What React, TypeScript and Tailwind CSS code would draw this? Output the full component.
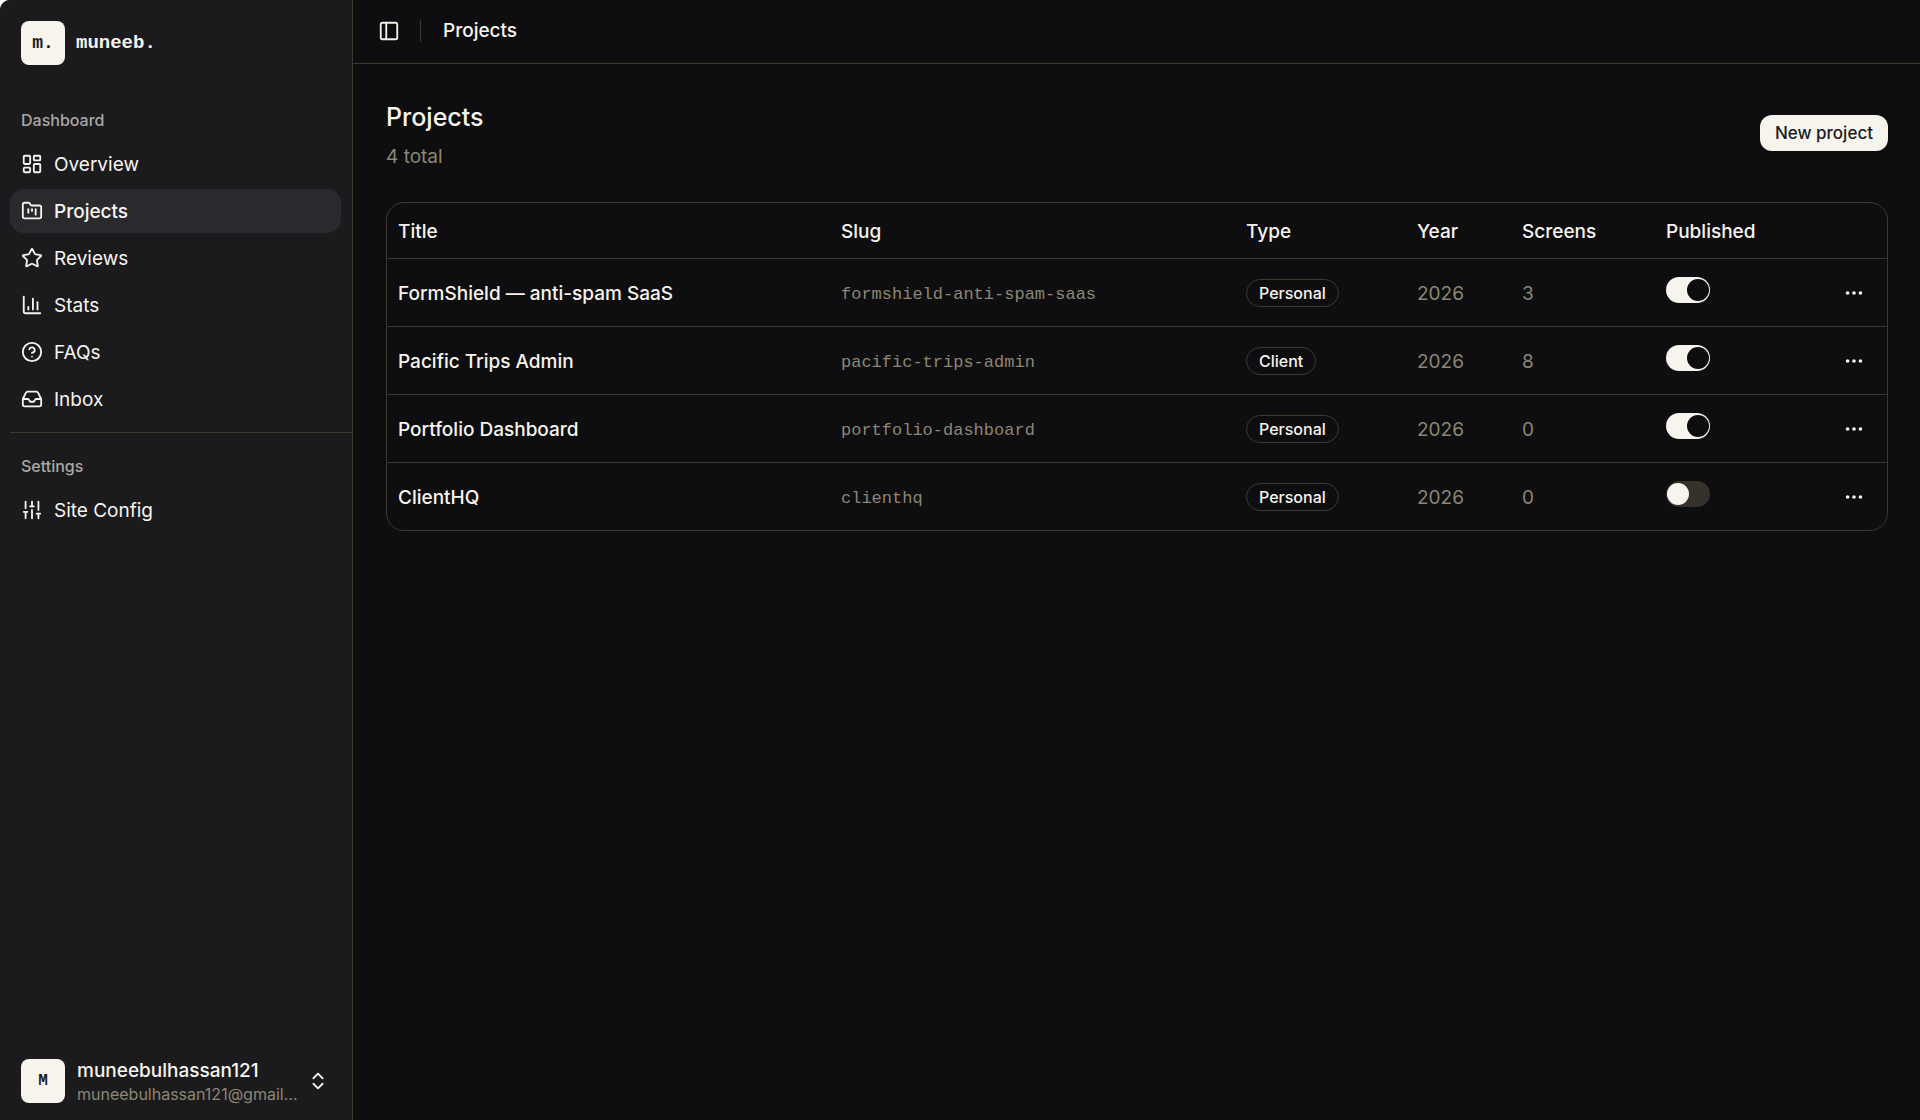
import { useState } from "react";
import {
  ChevronsUpDown,
  CircleQuestionMark,
  Ellipsis,
  FolderKanban,
  Inbox,
  LayoutDashboard,
  PanelLeft,
  SlidersVertical,
  Star,
  type LucideIcon,
} from "lucide-react";

type NavItem = { label: string; icon: LucideIcon | typeof StatsIcon };

type Project = {
  title: string;
  slug: string;
  type: "Personal" | "Client";
  year: number;
  screens: number;
  published: boolean;
};

function StatsIcon({ className }: { className?: string }) {
  return (
    <svg
      viewBox="0 0 24 24"
      fill="none"
      stroke="currentColor"
      strokeWidth={2}
      strokeLinecap="round"
      strokeLinejoin="round"
      className={className}
      aria-hidden="true"
    >
      <path d="M3 3v16a2 2 0 0 0 2 2h16" />
      <path d="M18 17V9" />
      <path d="M13 17V5" />
      <path d="M8 17v-3" />
    </svg>
  );
}

const mainNav: NavItem[] = [
  { label: "Overview", icon: LayoutDashboard },
  { label: "Projects", icon: FolderKanban },
  { label: "Reviews", icon: Star },
  { label: "Stats", icon: StatsIcon },
  { label: "FAQs", icon: CircleQuestionMark },
  { label: "Inbox", icon: Inbox },
];

const settingsNav: NavItem[] = [{ label: "Site Config", icon: SlidersVertical }];

const initialProjects: Project[] = [
  { title: "FormShield — anti-spam SaaS", slug: "formshield-anti-spam-saas", type: "Personal", year: 2026, screens: 3, published: true },
  { title: "Pacific Trips Admin", slug: "pacific-trips-admin", type: "Client", year: 2026, screens: 8, published: true },
  { title: "Portfolio Dashboard", slug: "portfolio-dashboard", type: "Personal", year: 2026, screens: 0, published: true },
  { title: "ClientHQ", slug: "clienthq", type: "Personal", year: 2026, screens: 0, published: false },
];

function NavGroup({ title, items, active }: { title: string; items: NavItem[]; active?: string }) {
  return (
    <div className="py-[11px] pr-[11px] pl-[10px]">
      <h2 className="flex h-11 items-center px-[11px] text-base font-medium text-[#a9a8a6]">{title}</h2>
      <ul className="flex flex-col gap-[3px]">
        {items.map(({ label, icon: Icon }) => (
          <li key={label}>
            <a
              href="#"
              aria-current={label === active ? "page" : undefined}
              className={`flex h-11 items-center gap-[11px] rounded-[14px] px-[11px] text-[19px] ${
                label === active ? "bg-[#2a2a2e] font-medium" : "hover:bg-[#2a2a2e]"
              }`}
            >
              <Icon className="size-[22px]" />
              <span className="pt-0.5">{label}</span>
            </a>
          </li>
        ))}
      </ul>
    </div>
  );
}

function Sidebar() {
  return (
    <aside className="flex w-[353px] shrink-0 flex-col border-r border-[#3d392f] bg-[#1b1b1d]">
      <div className="p-[10px] pb-[11px]">
        <a href="#" className="flex h-[66px] items-center gap-[11px] px-[11px] font-['Liberation_Mono',monospace] font-bold">
          <span className="flex size-11 items-center justify-center rounded-lg bg-[#f7f3ed] text-lg text-[#1b1b1d]">
            m.
          </span>
          <span className="text-[19px]">muneeb.</span>
        </a>
      </div>
      <nav>
        <NavGroup title="Dashboard" items={mainNav} active="Projects" />
        <hr className="ml-[10px] border-[#3d392f]" />
        <NavGroup title="Settings" items={settingsNav} />
      </nav>
      <div className="mt-auto py-[6px] pr-3 pl-[10px]">
        <button type="button" className="flex h-[66px] w-full items-center gap-3 px-[11px] text-left">
          <span className="flex size-11 shrink-0 items-center justify-center rounded-lg bg-[#f7f3ed] font-['Liberation_Mono',monospace] text-base font-bold text-[#1b1b1d]">
            M
          </span>
          <span className="-mr-1 min-w-0 flex-1 pt-px">
            <span className="block truncate text-[19px] leading-6 font-medium">muneebulhassan121</span>
            <span className="block truncate text-base leading-[22px] text-[#8c8674]">muneebulhassan121@gmail.com</span>
          </span>
          <ChevronsUpDown className="size-[22px] shrink-0" />
        </button>
      </div>
    </aside>
  );
}

function Switch({ checked, label, onChange }: { checked: boolean; label: string; onChange: () => void }) {
  return (
    <button
      type="button"
      role="switch"
      aria-checked={checked}
      aria-label={label}
      onClick={onChange}
      className={`flex h-[26px] w-11 items-center rounded-full p-px ${
        checked ? "justify-end bg-[#f7f3ed]" : "justify-start bg-[#36322b]"
      }`}
    >
      <span className={`size-[22px] rounded-full ${checked ? "bg-[#0e0e10]" : "bg-[#f7f3ed]"}`} />
    </button>
  );
}

export default function App() {
  const [projects, setProjects] = useState(initialProjects);

  function togglePublished(slug: string) {
    setProjects((prev) => prev.map((p) => (p.slug === slug ? { ...p, published: !p.published } : p)));
  }

  return (
    <div className="flex min-h-screen overflow-hidden rounded-tl-[10px] bg-[#0e0e10] font-[Inter,sans-serif] text-[#f7f3ed]">
      <Sidebar />
      <div className="min-w-0 flex-1">
        <header className="flex h-16 items-center border-b border-[#3d392f] px-[25px] pb-px">
          <button type="button" aria-label="Toggle sidebar">
            <PanelLeft className="size-[22px]" />
          </button>
          <span className="ml-5 h-[22px] w-px bg-[#3d392f]" />
          <nav aria-label="Breadcrumb" className="ml-[22px] text-[19px] font-medium">
            Projects
          </nav>
        </header>

        <main className="p-[33px] pr-8">
          <div className="flex items-center justify-between">
            <div>
              <h1 className="text-[25px] leading-10 font-medium">Projects</h1>
              <p className="mt-2 text-[19px] leading-6 text-[#8c8674]">{projects.length} total</p>
            </div>
            <button type="button" className="h-9 rounded-xl bg-[#f7f3ed] px-[15px] pt-0.5 text-[17px] font-medium text-[#1b1b1d]">
              New project
            </button>
          </div>

          <div className="mt-[33px] overflow-hidden rounded-[18px] border border-[#3d392f]">
            <table className="w-full table-fixed border-separate border-spacing-0 text-left text-[19px]">
              <thead>
                <tr className="h-14 *:border-b *:border-[#3d392f] *:px-[11px] *:pt-1 *:font-medium">
                  <th>Title</th>
                  <th className="w-[27%]">Slug</th>
                  <th className="w-[171px]">Type</th>
                  <th className="w-[105px]">Year</th>
                  <th className="w-[144px]">Screens</th>
                  <th className="w-[166px]">Published</th>
                  <th className="w-[66px]" aria-label="Actions" />
                </tr>
              </thead>
              <tbody>
                {projects.map((p) => (
                  <tr
                    key={p.slug}
                    className="h-[68px] *:border-b *:border-[#3d392f] *:px-[11px] last:h-[67px] last:*:border-b-0"
                  >
                    <td className="truncate pt-1 font-medium">{p.title}</td>
                    <td className="truncate pt-1 font-['Liberation_Mono',monospace] text-[17px] text-[#8c8674]">{p.slug}</td>
                    <td>
                      <span className="flex h-7 w-fit items-center rounded-full border border-[#3d392f] px-3 text-base font-medium">
                        {p.type}
                      </span>
                    </td>
                    <td className="pt-1 text-[#8c8674]">{p.year}</td>
                    <td className="pt-1 text-[#8c8674]">{p.screens}</td>
                    <td className="pb-1.5">
                      <Switch
                        checked={p.published}
                        label={`Publish ${p.title}`}
                        onChange={() => togglePublished(p.slug)}
                      />
                    </td>
                    <td>
                      <button type="button" aria-label="Open menu" className="flex size-11 items-center justify-center">
                        <Ellipsis className="size-[22px]" />
                      </button>
                    </td>
                  </tr>
                ))}
              </tbody>
            </table>
          </div>
        </main>
      </div>
    </div>
  );
}
